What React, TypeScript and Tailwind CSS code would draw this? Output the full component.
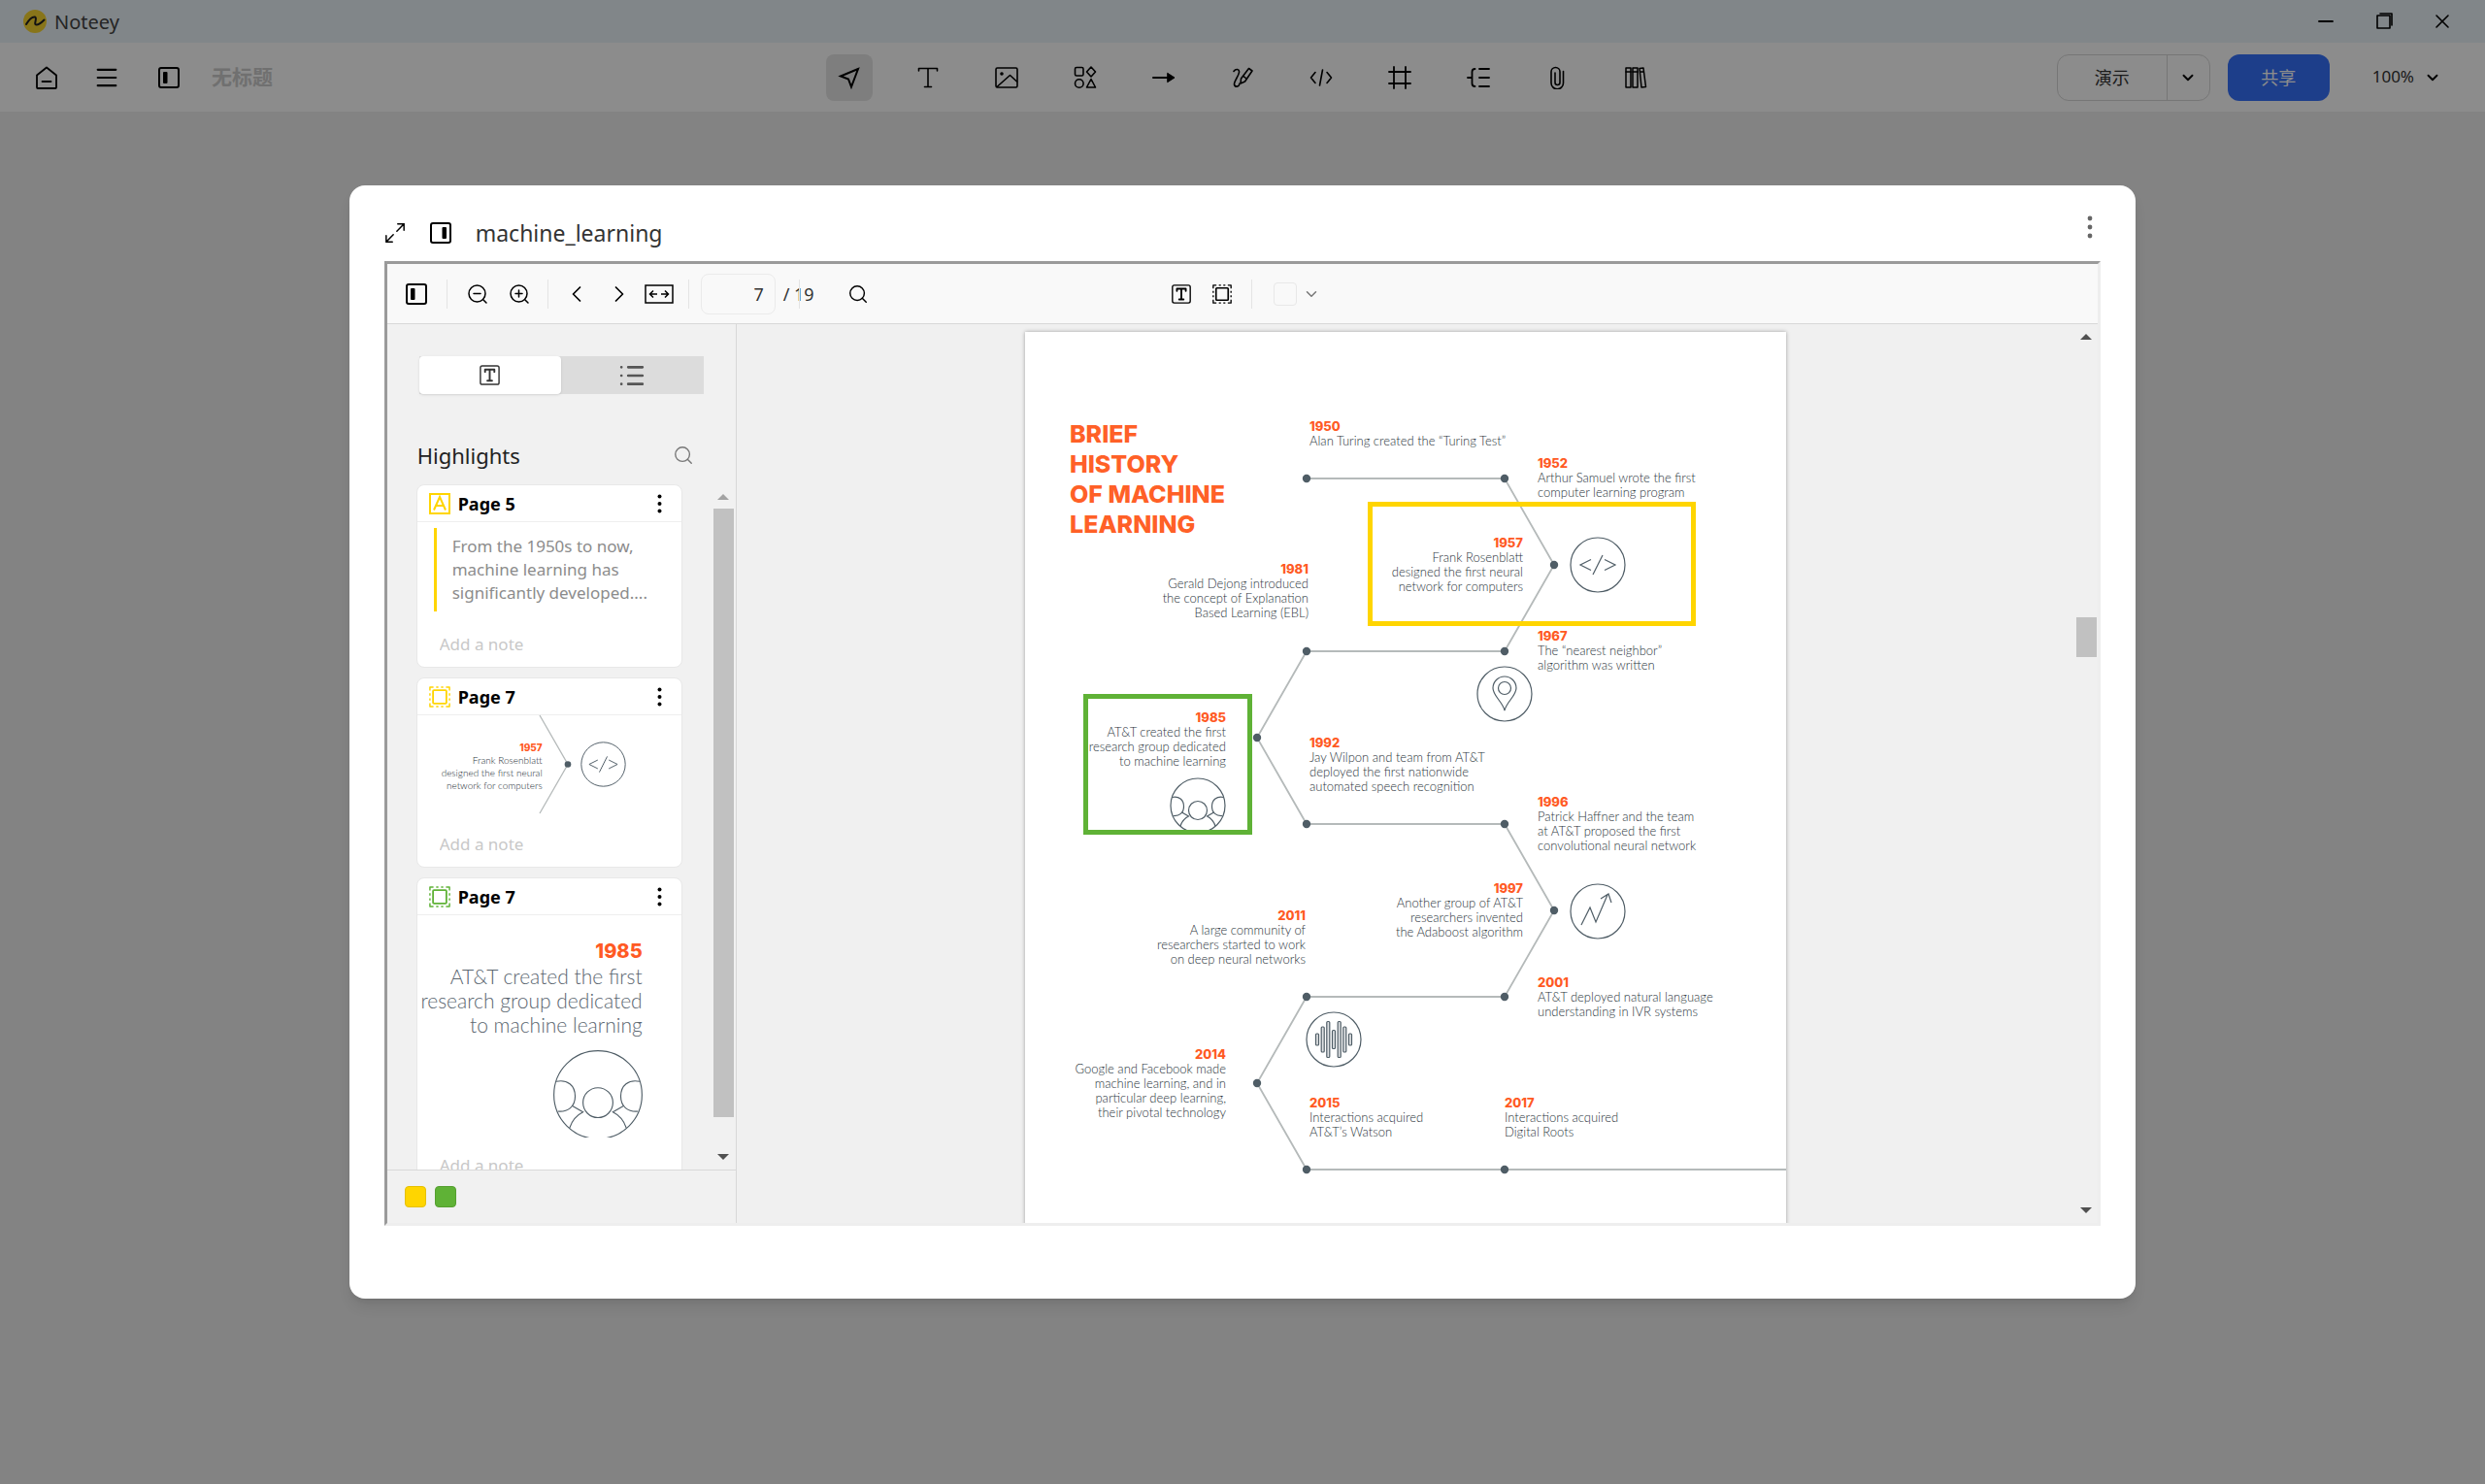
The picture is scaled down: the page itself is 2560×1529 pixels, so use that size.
import type { ReactNode } from 'react';
import { ChevronDown, ChevronLeft, ChevronRight, Menu, Minus, Search, X } from 'lucide-react';

type IconProps = { className?: string };

function Svg({ className = 'size-6', width = 1.6, children }: { className?: string; width?: number; children: ReactNode }) {
  return (
    <svg className={className} viewBox="0 0 24 24" fill="none" stroke="currentColor" strokeWidth={width} strokeLinecap="round" strokeLinejoin="round">
      {children}
    </svg>
  );
}

const PanelIcon = ({ className, right = false }: IconProps & { right?: boolean }) => (
  <Svg className={className} width={2}>
    <rect x="2" y="2" width="20" height="20" rx="2" />
    <rect x={right ? 13.5 : 6} y="6" width="4.5" height="12" rx="1" fill="currentColor" stroke="none" />
  </Svg>
);

const TextBoxIcon = ({ className }: IconProps) => (
  <Svg className={className} width={1.5}>
    <rect x="2" y="2" width="20" height="20" rx="2" />
    <path d="M7 8.5V6h10v2.5M12 6v12M9.5 18h5" strokeWidth="2" />
  </Svg>
);

const AreaIcon = ({ className }: IconProps) => (
  <Svg className={className} width={2}>
    <rect x="4.5" y="4.5" width="15" height="15" rx="1" />
    <path
      d="M1 5V1h4M19 1h4v4M23 19v4h-4M5 23H1v-4M8 1h2.5M13.5 1H16M8 23h2.5M13.5 23H16M1 8v2.5M1 13.5V16M23 8v2.5M23 13.5V16"
      strokeWidth="1.6"
      strokeLinecap="butt"
    />
  </Svg>
);

const ZoomIcon = ({ plus = false }: { plus?: boolean }) => (
  <Svg className="size-6" width={1.5}>
    <circle cx="11.5" cy="11.5" r="8.5" />
    <path d="M18 18l3 3M8 11.5h7" />
    {plus && <path d="M11.5 8v7" />}
  </Svg>
);

const Dots = ({ className }: IconProps) => (
  <svg className={className} viewBox="0 0 6 24" fill="currentColor">
    <circle cx="3" cy="3" r="2.4" />
    <circle cx="3" cy="12" r="2.4" />
    <circle cx="3" cy="21" r="2.4" />
  </svg>
);

const tools: { name: string; icon: ReactNode }[] = [
  { name: 'Select', icon: <Svg width={2}><path d="M21 3L3 10.5l8 3 3 8z" strokeLinejoin="miter" /></Svg> },
  { name: 'Text', icon: <Svg><path d="M2.5 5V2.5h19V5M12 2.5v19M8.5 21.5h7" /></Svg> },
  {
    name: 'Image',
    icon: (
      <Svg>
        <rect x="1" y="2" width="22" height="20" rx="1.5" />
        <path d="M2 21.5L15.5 9.5l7 6.500" />
        <circle cx="7" cy="8" r="1" fill="currentColor" />
      </Svg>
    ),
  },
  {
    name: 'Shapes',
    icon: (
      <Svg>
        <rect x="1.5" y="1.5" width="8.5" height="8.5" rx="1.5" />
        <path d="M18 1l4.500 5L18 11l-4.500-5z" />
        <circle cx="5.8" cy="18" r="4.3" />
        <path d="M18 13.500l4.500 8.500h-9z" />
      </Svg>
    ),
  },
  {
    name: 'Arrow',
    icon: (
      <Svg width={2}>
        <path d="M1 12h16" />
        <path d="M16 7.500l7 4.500-7 4.500z" fill="currentColor" strokeWidth="1" />
      </Svg>
    ),
  },
  {
    name: 'Pen',
    icon: (
      <Svg>
        <path d="M3 5.500c2-3 6-2.500 5.500 1C8 10.500 3 16 3.500 19c.5 3 5 3 5.500-1" />
        <path d="M18.500 2.500l3.500 2.500-7.500 11-4.500 2 .5-5z" />
        <path d="M13 10.500l3 2.500" />
      </Svg>
    ),
  },
  { name: 'Code', icon: <Svg><path d="M6 6.500L1.500 12 6 17.500M18 6.500l4.500 5.500-4.500 5.500M13.500 4l-3 16" /></Svg> },
  { name: 'Frame', icon: <Svg width={1.8}><path d="M6 1v22M18 1v22M1 6h22M1 18h22" /></Svg> },
  {
    name: 'Mind map',
    icon: <Svg width={1.8}><path d="M8.500 3c-2 0-3 1-3 3v12c0 2 1 3 3 3M1 12h4.500M13 3h10M13 12h10M13 21h10" /></Svg>,
  },
  {
    name: 'Attachment',
    icon: <Svg><path d="M18.500 5.500v12a6 6 0 0 1-12.500 0V6a4.500 4.500 0 0 1 9 0v11a2.500 2.500 0 0 1-5 0V7" /></Svg>,
  },
  {
    name: 'Library',
    icon: (
      <Svg width={1.5}>
        <rect x="2" y="2" width="5" height="20" />
        <rect x="9" y="2" width="5" height="20" />
        <path d="M16 2.500l4-.5 2.500 19.500-4.500.5zM2 6h5M9 6h5M16.500 6h4" />
      </Svg>
    ),
  },
];

const LINE = '#b5baba';
const INK = '#4f5d66';

const CodeGlyph = ({ cx, cy }: { cx: number; cy: number }) => (
  <g transform={`translate(${cx} ${cy})`} stroke={INK} strokeWidth="1.2" fill="none">
    <circle r="28" />
    <path d="M-7-5.500L-18 0l11 5.500M7-5.500L18 0 7 5.500M5-10L-5 10" />
  </g>
);

const WheelGlyph = ({ stroke = 1.2 }: { stroke?: number }) => (
  <g stroke={INK} strokeWidth={stroke} fill="none">
    <circle r="28" />
    <circle cy="5" r="9.500" />
    <path d="M-26.500-8.500C-19.500-10-14.500-6-14.500 1c0 6.500-4.500 10-11 9.500M26.500-8.500C19.500-10 14.500-6 14.500 1c0 6.500 4.500 10 11 9.500" />
    <path d="M-16.500 7l7 4c-4 2-7 5.500-8.500 10M16.500 7l-7 4c4 2 7 5.500 8.500 10" />
  </g>
);

type Entry = { year: string; lines: string[]; place: string };

const entries: Entry[] = [
  { year: '1950', lines: ['Alan Turing created the “Turing Test”'], place: 'left-[293px] top-[90px]' },
  { year: '1952', lines: ['Arthur Samuel wrote the first', 'computer learning program'], place: 'left-[528px] top-[128px]' },
  { year: '1957', lines: ['Frank Rosenblatt', 'designed the first neural', 'network for computers'], place: 'right-[271px] top-[210px] text-right' },
  { year: '1981', lines: ['Gerald Dejong introduced', 'the concept of Explanation', 'Based Learning (EBL)'], place: 'right-[492px] top-[237px] text-right' },
  { year: '1967', lines: ['The “nearest neighbor”', 'algorithm was written'], place: 'left-[528px] top-[306px]' },
  { year: '1985', lines: ['AT&T created the first', 'research group dedicated', 'to machine learning'], place: 'right-[577px] top-[390px] text-right' },
  { year: '1992', lines: ['Jay Wilpon and team from AT&T', 'deployed the first nationwide', 'automated speech recognition'], place: 'left-[293px] top-[416px]' },
  { year: '1996', lines: ['Patrick Haffner and the team', 'at AT&T proposed the first', 'convolutional neural network'], place: 'left-[528px] top-[477px]' },
  { year: '1997', lines: ['Another group of AT&T', 'researchers invented', 'the Adaboost algorithm'], place: 'right-[271px] top-[566px] text-right' },
  { year: '2011', lines: ['A large community of', 'researchers started to work', 'on deep neural networks'], place: 'right-[495px] top-[594px] text-right' },
  { year: '2001', lines: ['AT&T deployed natural language', 'understanding in IVR systems'], place: 'left-[528px] top-[663px]' },
  { year: '2014', lines: ['Google and Facebook made', 'machine learning, and in', 'particular deep learning,', 'their pivotal technology'], place: 'right-[577px] top-[737px] text-right' },
  { year: '2015', lines: ['Interactions acquired', 'AT&T’s Watson'], place: 'left-[293px] top-[787px]' },
  { year: '2017', lines: ['Interactions acquired', 'Digital Roots'], place: 'left-[494px] top-[787px]' },
];

const nodes = [
  [290, 151], [494, 151], [545, 240], [494, 329], [290, 329], [239, 418], [290, 507],
  [494, 507], [545, 596], [494, 685], [290, 685], [239, 774], [290, 863], [494, 863],
];

const bars = [[-17, 6], [-11.3, 13], [-5.7, 18.5], [0, 9.5], [5.7, 18.5], [11.3, 13], [17, 6]];

function TimelineDrawing() {
  return (
    <svg className="absolute left-0 top-0" width="784" height="920" viewBox="0 0 784 920">
      <polyline points={nodes.map((n) => n.join(',')).join(' ') + ' 784,863'} fill="none" stroke={LINE} strokeWidth="1.8" />
      {nodes.map(([x, y]) => (
        <circle key={`${x}-${y}`} cx={x} cy={y} r="4.2" fill={INK} />
      ))}
      <CodeGlyph cx={590} cy={240} />
      <g transform="translate(494 373)" stroke={INK} strokeWidth="1.2" fill="none">
        <circle r="28" />
        <path d="M0 17C-2 8-12 2-12-6a12 12 0 0 1 24 0C12 2 2 8 0 17z" />
        <circle cy="-6" r="6.500" />
      </g>
      <g transform="translate(178 488)">
        <WheelGlyph />
      </g>
      <g transform="translate(590 597)" stroke={INK} strokeWidth="1.2" fill="none">
        <circle r="28" />
        <path d="M-17 14L-8-4l6 15L10-17M3-13l8-5 3 9" />
      </g>
      <g transform="translate(318 729)" stroke={INK} strokeWidth="1.2" fill="none">
        <circle r="28" />
        {bars.map(([x, h]) => (
          <rect key={x} x={x - 1.5} y={-h} width="3" height={h * 2} rx="1" fill="#dfe2e4" />
        ))}
      </g>
    </svg>
  );
}

function DocumentPage() {
  return (
    <article className="relative h-[1014px] w-[784px] shrink-0 bg-white shadow-[0_0_4px_rgba(0,0,0,0.35)]">
      <TimelineDrawing />
      <h1 className="absolute left-[46px] top-[90px] font-['Inter',sans-serif] text-[25px] leading-[31px] font-extrabold text-[#ff6027]">
        BRIEF<br />HISTORY<br />OF MACHINE<br />LEARNING
      </h1>
      {entries.map((entry) => (
        <section key={entry.year} className={`absolute whitespace-nowrap ${entry.place}`}>
          <h2 className="font-['Inter',sans-serif] text-[13px] leading-[15px] font-extrabold text-[#ff5a24]">{entry.year}</h2>
          {entry.lines.map((line) => (
            <p key={line} className="font-['Lato',sans-serif] text-[13px] leading-[15px] font-light text-[#2a343b]">{line}</p>
          ))}
        </section>
      ))}
      <div className="absolute left-[353px] top-[175px] h-32 w-[338px] border-[5px] border-[#ffd500]" />
      <div className="absolute left-[60px] top-[373px] h-[145px] w-[174px] border-[5px] border-[#5fb236]" />
    </article>
  );
}

function HighlightCard({ page, icon, children }: { page: string; icon: ReactNode; children: ReactNode }) {
  return (
    <article className="shrink-0 rounded-lg border border-[#e8e8e8] bg-white">
      <header className="flex h-[38px] items-center gap-2 border-b border-[#eee] pr-4 pl-3">
        {icon}
        <h3 className="flex-1 text-lg font-bold text-black">{page}</h3>
        <button aria-label="More" className="flex w-3 justify-center">
          <Dots className="h-5 w-[5px]" />
        </button>
      </header>
      {children}
      <input aria-label="Add a note" placeholder="Add a note" className="mb-1 block h-10 w-full px-[23px] text-[17px] outline-none placeholder:text-[#c8c8c8]" />
    </article>
  );
}

function ScrollArrow({ up = false, className }: { up?: boolean; className: string }) {
  return (
    <svg className={className} width="12" height="6" viewBox="0 0 12 6" fill="currentColor">
      <path d={up ? 'M6 0l6 6H0z' : 'M0 0h12L6 6z'} />
    </svg>
  );
}

const Divider = ({ className = '' }: IconProps) => <span className={`h-[30px] w-px bg-[#e4e4e4] ${className}`} />;

function ReaderToolbar() {
  return (
    <div className="grid h-[62px] shrink-0 grid-cols-3 items-center border-b border-[#d8d8d8] bg-[#f9f9f9]">
      <div className="flex items-center pl-3">
        <button aria-label="Toggle sidebar" className="flex w-9 justify-center"><PanelIcon className="size-6" /></button>
        <Divider className="mx-[13px]" />
        <button aria-label="Zoom out" className="mr-[7px] flex w-9 justify-center"><ZoomIcon /></button>
        <button aria-label="Zoom in" className="flex w-9 justify-center"><ZoomIcon plus /></button>
        <Divider className="mx-[11px]" />
        <button aria-label="Previous page" className="mr-2 flex w-9 justify-center"><ChevronLeft className="size-7" strokeWidth={1.5} /></button>
        <button aria-label="Next page" className="flex w-9 justify-center"><ChevronRight className="size-7" strokeWidth={1.5} /></button>
        <button aria-label="Fit width" className="ml-[5px] flex w-9 justify-center">
          <svg className="h-5 w-[30px]" viewBox="0 0 30 20" fill="none" stroke="currentColor" strokeWidth="1.5">
            <rect x="1" y="1" width="28" height="18" />
            <path d="M13 10H5.500M9 6.500L5.500 10 9 13.500M17 10h7.500M21 6.500l3.500 3.500-3.500 3.500" />
          </svg>
        </button>
        <Divider className="mx-3" />
        <input aria-label="Page" defaultValue="7" className="h-[42px] w-[77px] rounded-lg border border-[#ebebeb] pr-[11px] text-right text-lg text-[#333] outline-none" />
        <span className="ml-2 w-8 text-lg whitespace-nowrap text-[#333]">/ 19</span>
        <Divider className="-ml-4" />
        <button aria-label="Search" className="ml-[42px] flex w-9 justify-center"><Search className="size-[22px]" strokeWidth={1.6} /></button>
      </div>
      <div className="flex items-center justify-center">
        <button aria-label="Text highlight" className="mr-1.5 flex w-9 justify-center"><TextBoxIcon className="size-[22px]" /></button>
        <button aria-label="Area highlight" className="flex w-9 justify-center"><AreaIcon className="size-5" /></button>
        <Divider className="mr-[22px] ml-3" />
        <button aria-label="Color" className="flex items-center gap-1.5 text-[#777]">
          <span className="size-6 rounded-sm border border-[#e8e8e8]" />
          <ChevronDown className="size-[18px]" />
        </button>
      </div>
    </div>
  );
}

function Sidebar() {
  return (
    <aside className="flex w-[360px] shrink-0 flex-col border-r border-[#d8d8d8] bg-[#f1f1f1]">
      <div className="mx-[33px] mt-[33px] flex h-[39px] bg-[#dcdcdc]">
        <button aria-label="Highlights" className="flex flex-1 items-center justify-center rounded-sm bg-white shadow-sm"><TextBoxIcon className="size-[23px] text-[#333]" /></button>
        <button aria-label="Outline" className="flex flex-1 items-center justify-center text-[#555]">
          <Svg className="size-[26px]" width={2.5}><path d="M8.500 4H22M8.500 12H22M8.500 20H22M2 4h0M2 12h0M2 20h0" /></Svg>
        </button>
      </div>
      <div className="mt-12 flex h-[30px] items-center justify-between pr-[43px] pl-[31px]">
        <h2 className="text-[22px] text-[#222]">Highlights</h2>
        <button aria-label="Search highlights"><Search className="size-[22px] text-[#777]" strokeWidth={1.5} /></button>
      </div>
      <div className="mt-[15px] flex min-h-0 flex-1 overflow-hidden pr-0.5 pl-[30px]">
        <div className="flex flex-1 flex-col gap-2.5">
          <HighlightCard
            page="Page 5"
            icon={
              <svg className="size-[22px]" viewBox="0 0 22 22" fill="none" stroke="#ffd500" strokeWidth="2">
                <rect x="1" y="1" width="20" height="20" />
                <path d="M5 17.500L11 4l6 13.500M7 13h8" />
              </svg>
            }
          >
            <blockquote className="mt-1.5 mb-[13px] ml-[17px] border-l-[3px] border-[#ffd500] py-[7px] pl-4 text-[17px] leading-6 whitespace-nowrap text-[#8c8c8c]">
              From the 1950s to now,<br />machine learning has<br />significantly developed....
            </blockquote>
          </HighlightCard>
          <HighlightCard page="Page 7" icon={<AreaIcon className="size-[22px] text-[#ffd500]" />}>
            <div className="flex h-[112px]">
              <div className="w-[129px] pt-[27px] text-right whitespace-nowrap">
                <p className="font-['Inter',sans-serif] text-[10px] leading-[13px] font-extrabold text-[#ff5a24]">1957</p>
                <p className="font-['Lato',sans-serif] text-[10px] leading-[13px] font-light text-[#2a343b]">
                  Frank Rosenblatt<br />designed the first neural<br />network for computers
                </p>
              </div>
              <svg className="overflow-visible" width="92" height="101" viewBox="0 0 92 101">
                <path d="M-3 0L26 50.500L-3 101" fill="none" stroke={LINE} strokeWidth="1.3" />
                <circle cx="26" cy="50.500" r="3.300" fill={INK} />
                <g transform="translate(62.500 50.500) scale(.81)"><CodeGlyph cx={0} cy={0} /></g>
              </svg>
            </div>
          </HighlightCard>
          <HighlightCard page="Page 7" icon={<AreaIcon className="size-[22px] text-[#5fb236]" />}>
            <div className="flex h-[237px] flex-col items-end pt-[25px] pr-10 whitespace-nowrap">
              <p className="font-['Inter',sans-serif] text-xl leading-[25px] font-extrabold text-[#ff5a24]">1985</p>
              <p className="text-right font-['Lato',sans-serif] text-[21px] leading-[25px] font-light text-[#5b6670]">
                AT&amp;T created the first<br />research group dedicated<br />to machine learning
              </p>
              <svg className="mt-[14px] shrink-0" width="92" height="90" viewBox="-46 -46 92 90">
                <g transform="scale(1.620)"><WheelGlyph stroke={0.7} /></g>
              </svg>
            </div>
          </HighlightCard>
        </div>
        <div className="ml-8 flex w-[21px] flex-col items-center">
          <ScrollArrow up className="mt-2.5 mb-[9px] shrink-0 text-[#a3a3a3]" />
          <div className="w-full flex-1 bg-[#c1c1c1]" />
          <ScrollArrow className="mt-[38px] mb-[10px] shrink-0 text-[#505050]" />
        </div>
      </div>
      <footer className="flex h-[55px] shrink-0 items-center gap-[9px] border-t border-[#d8d8d8] pl-[18px]">
        <button aria-label="Yellow" className="size-[22px] rounded-sm border border-[#e6c000] bg-[#ffd500]" />
        <button aria-label="Green" className="size-[22px] rounded-sm border border-[#559f30] bg-[#5fb236]" />
      </footer>
    </aside>
  );
}

export default function App() {
  return (
    <div className="relative flex h-screen flex-col overflow-hidden bg-[#eeeeee] font-['Segoe_UI','Noto_Sans','Noto_Sans_CJK_SC',sans-serif]">
      {/* Window title bar */}
      <div className="flex h-11 shrink-0 items-center bg-[#ecf4f9] pl-6">
        <svg className="size-6" viewBox="0 0 24 24" fill="none">
          <circle cx="12" cy="12" r="12" fill="#f8d530" />
          <path d="M3 15C6 10 9 7 12 7.500c3 1-2 8 1.500 8 3 0 5-2 8-5" stroke="#222" strokeWidth="2" strokeLinecap="round" />
        </svg>
        <span className="ml-2 flex-1 pt-0.5 text-xl text-[#444]">Noteey</span>
        <div className="flex items-center gap-9 pr-8 text-black">
          <button aria-label="Minimize"><Minus className="size-6" strokeWidth={1.8} /></button>
          <button aria-label="Restore">
            <Svg className="size-6" width={1.6}><rect x="5" y="6" width="13" height="13" /><path d="M8 4h12v12" /></Svg>
          </button>
          <button aria-label="Close"><X className="size-6" strokeWidth={1.6} /></button>
        </div>
      </div>

      {/* Board toolbar */}
      <div className="grid h-[71px] shrink-0 grid-cols-[1fr_auto_1fr] items-center bg-white text-black">
        <div className="flex items-center pl-9">
          <button aria-label="Home">
            <Svg className="size-6" width={1.8}><path d="M2 9.500L12 1.500l10 8V22a1 1 0 0 1-1 1H3a1 1 0 0 1-1-1zM7.500 16h9" /></Svg>
          </button>
          <button aria-label="Menu" className="ml-9"><Menu className="size-7" strokeWidth={1.8} /></button>
          <button aria-label="Sidebar" className="ml-[38px]"><PanelIcon className="size-6" /></button>
          <span className="ml-8 text-[21px] font-bold text-[#cccccc]">无标题</span>
        </div>
        <div className="flex gap-[33px]">
          {tools.map((tool, i) => (
            <button key={tool.name} aria-label={tool.name} className={`flex size-12 items-center justify-center rounded-lg ${i === 0 ? 'bg-[#e6e6e6]' : ''}`}>
              {tool.icon}
            </button>
          ))}
        </div>
        <div className="flex items-center justify-end pr-[45px] text-lg text-[#333]">
          <div className="flex h-12 rounded-xl border border-[#d8d8d8]">
            <button className="w-28">演示</button>
            <button aria-label="Present options" className="flex w-11 items-center justify-center border-l border-[#d8d8d8] text-black"><ChevronDown className="size-[18px]" strokeWidth={2.5} /></button>
          </div>
          <button className="ml-[18px] h-12 w-[105px] rounded-xl bg-[#3672fc] text-white">共享</button>
          <button className="ml-11 flex items-center gap-[10px] text-[17px]">
            100%
            <ChevronDown className="size-[18px] text-black" strokeWidth={2.5} />
          </button>
        </div>
      </div>

      {/* Document window over the dimmed board */}
      <div className="absolute inset-0 flex items-center justify-center bg-black/45">
        <div role="dialog" aria-label="machine_learning" className="flex h-3/4 w-[71.9%] flex-col rounded-2xl bg-white px-9 pb-[75px] shadow-lg">
          <header className="flex h-[78px] shrink-0 items-center pt-5 text-black">
            <button aria-label="Expand">
              <Svg className="size-[22px]" width={1.6}><path d="M14 10l8-8M15 2h7v7M10 14l-8 8M9 22H2v-7" strokeLinejoin="miter" /></Svg>
            </button>
            <button aria-label="Dock right" className="ml-6"><PanelIcon right className="size-6" /></button>
            <h1 className="ml-6 flex-1 text-[23px] leading-7 text-[#333]">machine_learning</h1>
            <button aria-label="More" className="mr-2 mb-3"><Dots className="h-6 w-1.5 text-[#666]" /></button>
          </header>
          <div className="flex min-h-0 flex-1 flex-col border-3 border-t-[#9a9a9a] border-r-[#eeeeee] border-b-[#eeeeee] border-l-[#9a9a9a]">
            <ReaderToolbar />
            <div className="flex min-h-0 flex-1 overflow-hidden">
              <Sidebar />
              <main className="flex min-w-0 flex-1 justify-center overflow-hidden bg-[#f0f0f0] pt-2">
                <DocumentPage />
              </main>
              <div className="flex w-6 flex-col items-center bg-[#f0f0f0] py-2.5 text-[#505050]">
                <ScrollArrow up className="shrink-0" />
                <div className="flex w-[21px] flex-1 flex-col pt-[286px]">
                  <div className="h-[41px] bg-[#c1c1c1]" />
                </div>
                <ScrollArrow className="shrink-0" />
              </div>
            </div>
          </div>
        </div>
      </div>
    </div>
  );
}
